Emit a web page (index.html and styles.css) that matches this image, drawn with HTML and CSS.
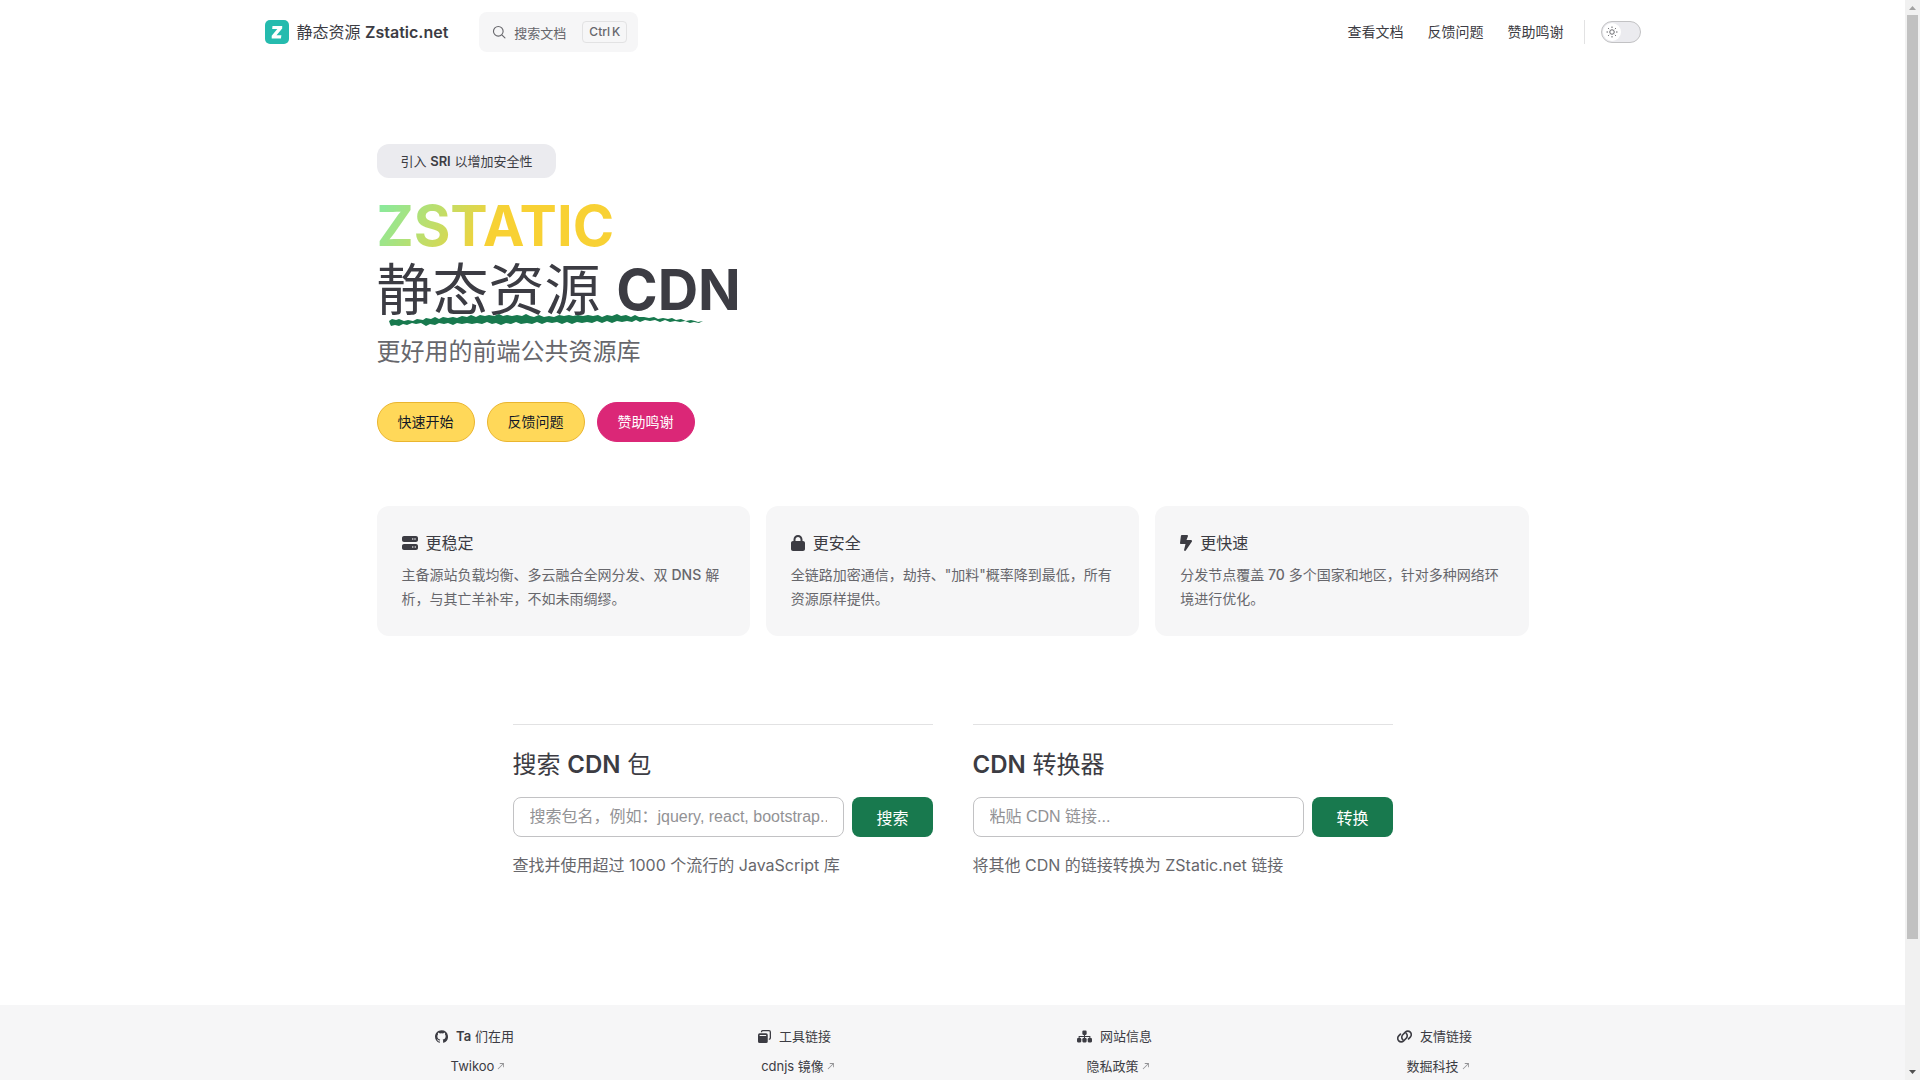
FILE: index.html
```
<!DOCTYPE html>
<html lang="zh-CN">
<head>
    <meta charset="UTF-8">
    <meta name="viewport" content="width=device-width, initial-scale=1.0">
    <title>静态资源 Zstatic.net</title>
    <link rel="stylesheet" href="styles.css">
</head>
<body>
    <header class="nav">
        <div class="nav-inner">
            <a class="brand" href="#">
                <svg class="logo" viewBox="0 0 24 24" aria-hidden="true">
                    <rect width="24" height="24" rx="5" fill="#25bbae"/>
                    <path d="M7.500 6h9.700v2.600l-5.700 6.700h4.900l-.5 3.200H6.700v-2.800l5.600-6.600H7.200z" fill="#fff"/>
                </svg>
                <span>静态资源 <b>Zstatic.net</b></span>
            </a>
            <button class="doc-search" type="button">
                <svg viewBox="0 0 20 20" aria-hidden="true"><path d="M14.400 14.400 18.500 18.500M15.900 9a6.900 6.900 0 1 1-13.800 0 6.900 6.900 0 0 1 13.800 0z" fill="none" stroke="currentColor" stroke-width="1.600" stroke-linecap="round"/></svg>
                <span>搜索文档</span>
                <kbd><span>Ctrl</span><span>K</span></kbd>
            </button>
            <nav class="menu">
                <a href="#">查看文档</a>
                <a href="#">反馈问题</a>
                <a href="#">赞助鸣谢</a>
            </nav>
            <button class="theme-switch" type="button" role="switch" aria-checked="false" aria-label="切换深色模式">
                <span class="knob">
                    <svg viewBox="0 0 24 24" aria-hidden="true"><circle cx="12" cy="12" r="4.500"/><path d="M12 1v3M12 20v3M1 12h3M20 12h3M4.200 4.200l2.100 2.100M17.700 17.700l2.100 2.100M4.200 19.800l2.100-2.100M17.700 6.300l2.100-2.100"/></svg>
                </span>
            </button>
        </div>
    </header>

    <main>
        <section class="hero">
            <a class="badge" href="#">引入 <b>SRI</b> 以增加安全性</a>
            <h1>
                <b class="name">ZSTATIC</b>
                <span class="headline">静态资源 <b>CDN</b>
                    <svg class="brush" viewBox="0 0 314 13" aria-hidden="true">
                        <path d="M0 7L3 5L7 6L10 5L15 7L19 6L24 7L28 5L34 6L37 4L42 5L46 3L50 5L54 3L59 4L64 3L68 4L73 2L78 3L82 1L87 3L91 1L96 2L100 1L105 2L110 0L114 2L118 1L123 2L128 1L133 2L137 0L141 2L145 3L150 1L155 3L160 2L165 3L170 1L175 2L180 1L184 2L189 1L194 2L199 1L204 2L209 1L213 3L218 1L223 2L228 0L232 2L237 1L242 3L246 1L250 3L255 3L260 4L265 3L269 5L274 4L279 5L283 4L287 6L292 5L297 7L302 6L306 7L309 8L314 7L310 9L305 8L301 9L296 7L291 8L286 7L281 8L276 6L271 8L266 6L261 7L256 6L251 8L247 6L243 8L238 7L233 8L228 7L223 9L218 7L213 9L208 7L203 9L198 8L193 9L188 8L183 10L178 8L173 10L168 8L163 9L158 8L153 10L148 8L143 10L138 9L132 10L127 8L122 10L117 9L112 11L107 9L103 10L98 8L93 10L88 9L83 10L78 9L73 10L68 9L64 11L59 9L55 10L50 9L46 11L41 10L37 12L32 9L27 10L23 9L18 11L14 10L10 12L6 11L2 12L1 10Z"/>
                    </svg>
                </span>
            </h1>
            <p class="tagline">更好用的前端公共资源库</p>
            <div class="actions">
                <a class="pill pill-yellow" href="#">快速开始</a>
                <a class="pill pill-yellow" href="#">反馈问题</a>
                <a class="pill pill-pink" href="#">赞助鸣谢</a>
            </div>
        </section>

        <section class="features">
            <article class="card">
                <h2>
                    <svg viewBox="0 0 512 512" aria-hidden="true"><path d="M64 32C28.700 32 0 60.700 0 96v64c0 35.300 28.700 64 64 64H448c35.300 0 64-28.700 64-64V96c0-35.300-28.700-64-64-64H64zm280 72a24 24 0 1 1 0 48 24 24 0 1 1 0-48zm48 24a24 24 0 1 1 48 0 24 24 0 1 1-48 0zM64 288c-35.300 0-64 28.700-64 64v64c0 35.300 28.700 64 64 64H448c35.300 0 64-28.700 64-64V352c0-35.300-28.700-64-64-64H64zm280 72a24 24 0 1 1 0 48 24 24 0 1 1 0-48zm56 24a24 24 0 1 1 48 0 24 24 0 1 1-48 0z"/></svg>
                    更稳定
                </h2>
                <p>主备源站负载均衡、多云融合全网分发、双 <b>DNS</b> 解析，与其亡羊补牢，不如未雨绸缪。</p>
            </article>
            <article class="card">
                <h2>
                    <svg viewBox="0 0 448 512" aria-hidden="true"><path d="M144 144v48H304V144c0-44.200-35.800-80-80-80s-80 35.800-80 80zM80 192V144C80 64.500 144.500 0 224 0s144 64.500 144 144v48h16c35.300 0 64 28.700 64 64V448c0 35.300-28.700 64-64 64H64c-35.300 0-64-28.700-64-64V256c0-35.300 28.700-64 64-64H80z"/></svg>
                    更安全
                </h2>
                <p>全链路加密通信，劫持、"加料"概率降到最低，所有资源原样提供。</p>
            </article>
            <article class="card">
                <h2>
                    <svg viewBox="0 0 384 512" aria-hidden="true"><path d="M0 256L28.500 28c2-16 15.600-28 31.800-28H228.900c15 0 27.100 12.100 27.100 27.100c0 3.200-.6 6.500-1.700 9.500L208 160H347.300c20.200 0 36.700 16.400 36.700 36.700c0 7.400-2.200 14.600-6.400 20.700l-192.200 281c-5.900 8.600-15.600 13.700-25.900 13.700h-2.900c-15.700 0-28.500-12.800-28.500-28.500c0-2.300 .3-4.600 .9-6.900L176 288H32c-17.700 0-32-14.300-32-32z"/></svg>
                    更快速
                </h2>
                <p>分发节点覆盖 <b>70</b> 多个国家和地区，针对多种网络环境进行优化。</p>
            </article>
        </section>

        <section class="tools">
            <form class="tool">
                <h2><label for="package">搜索 <b>CDN</b> 包</label></h2>
                <div class="tool-row">
                    <input id="package" type="text" placeholder="搜索包名，例如：jquery, react, bootstrap...">
                    <button type="button">搜索</button>
                </div>
                <p>查找并使用超过 1000 个流行的 JavaScript 库</p>
            </form>
            <form class="tool">
                <h2><label for="link"><b>CDN</b> 转换器</label></h2>
                <div class="tool-row">
                    <input id="link" type="text" placeholder="粘贴 CDN 链接...">
                    <button type="button">转换</button>
                </div>
                <p>将其他 CDN 的链接转换为 ZStatic.net 链接</p>
            </form>
        </section>
    </main>

    <footer class="footer">
        <div class="footer-inner">
            <div class="footer-col">
                <h3>
                    <svg viewBox="0 0 24 24" aria-hidden="true"><path d="M12 .3c-6.630 0-12 5.370-12 12 0 5.300 3.440 9.800 8.200 11.380.6.110.82-.26.82-.58v-2.040c-3.340.73-4.040-1.600-4.040-1.600-.55-1.390-1.340-1.760-1.340-1.760-1.090-.74.080-.73.080-.73 1.200.08 1.840 1.240 1.840 1.240 1.070 1.830 2.810 1.300 3.500 1 .1-.78.420-1.310.76-1.610-2.670-.3-5.470-1.330-5.470-5.930 0-1.310.47-2.380 1.240-3.220-.14-.3-.54-1.520.1-3.180 0 0 1-.32 3.300 1.230a11.500 11.500 0 0 1 6 0c2.280-1.550 3.290-1.230 3.290-1.230.64 1.660.24 2.880.12 3.180.76.840 1.230 1.910 1.230 3.220 0 4.610-2.810 5.630-5.480 5.920.42.360.81 1.100.81 2.220v3.290c0 .31.210.69.820.57A12 12 0 0 0 12 .3"/></svg>
                    <span><b>Ta</b> 们在用</span>
                </h3>
                <a href="#">Twikoo<svg viewBox="0 0 24 24" aria-hidden="true"><path d="M9 5v2h6.590L4 18.590 5.410 20 17 8.410V15h2V5H9z"/></svg></a>
            </div>
            <div class="footer-col">
                <h3>
                    <svg viewBox="0 0 24 24" aria-hidden="true"><path d="M3 6h12a3 3 0 0 1 3 3v12a3 3 0 0 1-3 3H3a3 3 0 0 1-3-3V9a3 3 0 0 1 3-3zm0 3v2h12V9z" fill-rule="evenodd"/><path d="M6.500 4V3A1.800 1.800 0 0 1 8.300 1.200h12A2.500 2.500 0 0 1 22.800 3.700v11A2.500 2.500 0 0 1 20 17" fill="none" stroke="currentColor" stroke-width="2.400"/></svg>
                    工具链接
                </h3>
                <a href="#">cdnjs 镜像<svg viewBox="0 0 24 24" aria-hidden="true"><path d="M9 5v2h6.590L4 18.590 5.410 20 17 8.410V15h2V5H9z"/></svg></a>
            </div>
            <div class="footer-col">
                <h3>
                    <svg class="wide" viewBox="0 0 28 24" aria-hidden="true"><rect x="10" y="1" width="8" height="8" rx="2"/><rect x="0" y="15" width="8" height="8" rx="2"/><rect x="10" y="15" width="8" height="8" rx="2"/><rect x="20" y="15" width="8" height="8" rx="2"/><path d="M14 8v8M4 16v-4h20v4" fill="none" stroke="currentColor" stroke-width="2"/></svg>
                    网站信息
                </h3>
                <a href="#">隐私政策<svg viewBox="0 0 24 24" aria-hidden="true"><path d="M9 5v2h6.590L4 18.590 5.410 20 17 8.410V15h2V5H9z"/></svg></a>
            </div>
            <div class="footer-col">
                <h3>
                    <svg class="wide" viewBox="2 1 26 22" aria-hidden="true"><g fill="none" stroke="currentColor" stroke-width="2.800" stroke-linecap="round"><path d="M12 17.500a6 6 0 0 1 0-8.500l4.500-4.500a6 6 0 0 1 8.500 0 6 6 0 0 1 0 8.500l-3 3"/><path d="M18 6.500a6 6 0 0 1 0 8.500l-4.500 4.500a6 6 0 0 1-8.500 0 6 6 0 0 1 0-8.500l3-3"/></g></svg>
                    友情链接
                </h3>
                <a href="#">数掘科技<svg viewBox="0 0 24 24" aria-hidden="true"><path d="M9 5v2h6.590L4 18.590 5.410 20 17 8.410V15h2V5H9z"/></svg></a>
            </div>
        </div>
    </footer>

    <div class="scrollbar" aria-hidden="true">
        <svg class="scroll-up" viewBox="0 0 15 15"><path d="M4 10h7L7.500 6z"/></svg>
        <div class="scroll-track"><div class="scroll-thumb"></div></div>
        <svg class="scroll-down" viewBox="0 0 15 15"><path d="M4 5h7L7.500 9z"/></svg>
    </div>
</body>
</html>
```
FILE: styles.css
```
/* Reset */
* {
    margin: 0;
    padding: 0;
    box-sizing: border-box;
}

/* The page draws its own scrollbar */
html {
    scrollbar-width: none;
}

body {
    padding-right: 15px; /* Room for the scrollbar */
    background-color: #fff;
    color: #3c3c43;
    font-family: Inter, "Noto Sans CJK SC", sans-serif;
    font-size: 16px;
    line-height: 24px;
}

a {
    color: inherit;
    text-decoration: none;
}

/* Headings keep Chinese at normal weight, Latin words are bold */
h1,
h2,
h3 {
    font-weight: 400;
}

b {
    font-weight: 600;
}

button {
    font-family: inherit;
    cursor: pointer;
}

svg {
    fill: currentColor;
    flex-shrink: 0;
}

/* Top navigation */
.nav-inner {
    display: flex;
    align-items: center;
    max-width: 1376px;
    height: 64px;
    margin: 0 auto;
}

.brand {
    display: flex;
    align-items: center;
    gap: 8px;
}

.logo {
    width: 24px;
    height: 24px;
}

.doc-search {
    display: flex;
    align-items: center;
    height: 40px;
    margin-left: 31px;
    padding: 0 11px 0 13px;
    border: none;
    border-radius: 8px;
    background-color: #f6f6f7;
    color: #67676c;
    font-size: 13px;
}

.doc-search svg {
    width: 14px;
    height: 14px;
    margin-right: 8px;
}

.doc-search kbd {
    display: flex;
    gap: 2px;
    margin-left: 16px;
    padding: 0 6px;
    border: 1px solid #e2e2e3;
    border-radius: 4px;
    font-family: inherit;
    font-size: 12px;
    font-weight: 500;
    line-height: 20px;
}

.menu {
    display: flex;
    gap: 24px;
    margin-left: auto;
    font-size: 14px;
}

.theme-switch {
    position: relative;
    width: 40px;
    height: 22px;
    margin-left: 37px;
    border: 1px solid #c2c2c4;
    border-radius: 11px;
    background-color: #ebebef;
}

/* Divider between the menu and the switch */
.theme-switch::before {
    content: "";
    position: absolute;
    top: -2px;
    left: -18px;
    width: 1px;
    height: 24px;
    background-color: #e2e2e3;
}

.knob {
    display: flex;
    align-items: center;
    justify-content: center;
    width: 18px;
    height: 18px;
    margin-left: 1px;
    border-radius: 50%;
    background-color: #fff;
}

.knob svg {
    width: 12px;
    height: 12px;
    fill: none;
    stroke: #67676c;
    stroke-width: 2;
}

/* Hero */
.hero,
.features {
    max-width: 1152px;
    margin: 0 auto;
}

.hero {
    padding-top: 80px;
}

.badge {
    display: inline-block;
    padding: 5px 24px;
    border-radius: 12px;
    background-color: #ebebef;
    font-size: 13px;
}

h1 {
    margin-top: 16px;
    font-size: 56px;
    line-height: 64px;
}

h1 b {
    font-weight: 700;
}

.name {
    display: block;
    width: fit-content;
    background: linear-gradient(120deg, #8ce99a 5%, #f8d134 50%);
    background-clip: text;
    -webkit-background-clip: text;
    color: transparent;
}

.headline {
    display: block;
    position: relative;
    width: fit-content;
}

.brush {
    position: absolute;
    left: 12px;
    bottom: -5px;
    width: 314px;
    height: 13px;
    fill: #18794e;
}

.tagline {
    margin-top: 12px;
    color: #67676c;
    font-size: 24px;
    line-height: 36px;
}

.actions {
    display: flex;
    gap: 12px;
    margin-top: 32px;
}

.pill {
    padding: 0 20px;
    border: 1px solid;
    border-radius: 20px;
    font-size: 14px;
    line-height: 38px;
}

.pill-yellow {
    border-color: #eab52f;
    background-color: #ffd859;
    color: #111827;
}

.pill-pink {
    border-color: #db2777;
    background-color: #db2777;
    color: #fff;
}

/* Feature cards */
.features {
    display: grid;
    grid-template-columns: repeat(3, 1fr);
    gap: 16px;
    margin-top: 64px;
}

.card {
    padding: 25px;
    border-radius: 12px;
    background-color: #f6f6f7;
}

.card h2 {
    display: flex;
    align-items: center;
    gap: 8px;
    font-size: 16px;
}

.card svg {
    height: 16px;
}

.card p {
    margin-top: 8px;
    color: #67676c;
    font-size: 14px;
}

.card b {
    font-weight: 500;
}

/* Search and converter */
.tools {
    display: grid;
    grid-template-columns: 1fr 1fr;
    gap: 40px;
    max-width: 880px;
    margin: 88px auto 128px;
}

.tool {
    min-width: 0;
    padding-top: 24px;
    border-top: 1px solid #e2e2e3;
}

.tool h2 {
    font-size: 24px;
    line-height: 32px;
}

.tool-row {
    display: flex;
    gap: 8px;
    margin: 16px 0;
}

.tool input {
    flex: 1;
    min-width: 0;
    height: 40px;
    padding: 0 16px;
    border: 1px solid #c2c2c4;
    border-radius: 8px;
    font-family: "Liberation Sans", "Noto Sans CJK SC", sans-serif;
    font-size: 16px;
}

.tool input::placeholder {
    color: #929295;
}

.tool button {
    padding: 0 24px;
    border: none;
    border-radius: 8px;
    background-color: #18794e;
    color: #fff;
    font-size: 16px;
}

.tool p {
    color: #67676c;
}

/* Footer */
.footer {
    padding: 19px 0 144px;
    background-color: #f6f6f7;
    font-size: 13px;
}

.footer-inner {
    display: grid;
    grid-template-columns: repeat(4, 1fr);
    max-width: 1284px;
    margin: 0 auto;
    padding-left: 4px;
}

.footer-col {
    display: flex;
    flex-direction: column;
    align-items: center;
    gap: 6px;
}

.footer h3 {
    display: flex;
    align-items: center;
    gap: 8px;
    font-size: 13px;
}

.footer h3 svg {
    width: 13px;
    height: 13px;
}

.footer h3 .wide {
    width: 15px;
}

.footer a {
    display: flex;
    align-items: center;
    gap: 2px;
    padding-left: 8px;
}

.footer a svg {
    width: 10px;
    height: 10px;
    color: #929295;
}

/* Scrollbar */
.scrollbar {
    position: fixed;
    top: 0;
    right: 0;
    bottom: 0;
    display: flex;
    flex-direction: column;
    width: 15px;
    background-color: #f1f1f1;
}

.scrollbar svg {
    width: 15px;
    height: 15px;
}

.scroll-up {
    color: #a3a3a3;
}

.scroll-down {
    color: #505050;
}

.scroll-track {
    flex: 1;
    padding: 0 2px;
}

.scroll-thumb {
    height: 88%;
    background-color: #c1c1c1;
}
```
